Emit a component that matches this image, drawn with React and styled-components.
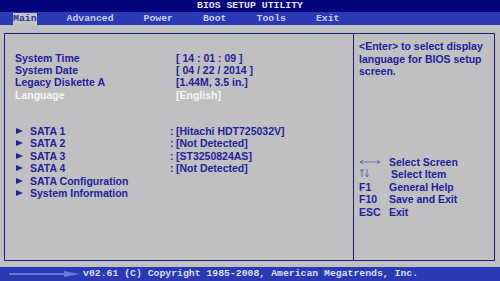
import React from "react";
import styled, { createGlobalStyle } from "styled-components";

const GlobalStyle = createGlobalStyle`
  html, body {
    margin: 0;
    padding: 0;
    background: #c0c0c0;
  }
  #root {
    width: 500px;
    height: 281px;
    overflow: hidden;
  }
`;

const Screen = styled.div`
  width: 500px;
  height: 281px;
  display: flex;
  flex-direction: column;
  background: #c0c0c2;
  font-family: "Liberation Sans", Arial, sans-serif;
`;

const TitleBar = styled.div`
  height: 12px;
  background: #06067c;
  color: #e4e4ec;
  font-family: "Liberation Mono", "DejaVu Sans Mono", monospace;
  font-weight: bold;
  font-size: 9.8px;
  line-height: 12px;
  text-align: center;
`;

const MenuBar = styled.div`
  height: 13px;
  background: #2a3ab4;
  display: flex;
  gap: 30px;
  padding-left: 13px;
`;

const MenuItem = styled.div`
  height: 12px;
  margin-top: 1px;
  font-family: "Liberation Mono", "DejaVu Sans Mono", monospace;
  font-weight: bold;
  font-size: 9.8px;
  line-height: 12px;
  color: ${(p) => (p.active ? "#2a3490" : "#c8cef0")};
  background: ${(p) => (p.active ? "#c4c4c8" : "transparent")};
`;

const Content = styled.div`
  flex: 1;
  padding: 8px 5px 6px 4px;
  display: flex;
`;

const Frame = styled.div`
  flex: 1;
  border: 1.5px solid #1e1e7e;
  display: grid;
  grid-template-columns: 349px 1fr;
`;

const LeftPanel = styled.div`
  border-right: 1.5px solid #1e1e7e;
  padding: 17.5px 0 0 10px;
`;

const RightPanel = styled.div`
  padding: 6px 0 0 5px;
  display: flex;
  flex-direction: column;
`;

const Group = styled.div`
  display: grid;
  grid-template-columns: 155px 6px auto;
  grid-auto-rows: 12.45px;
  align-items: center;
  margin-bottom: ${(p) => p.gap || 0}px;
`;

const Text = styled.div`
  font-size: 10.5px;
  font-weight: bold;
  line-height: 12.45px;
  color: ${(p) => (p.selected ? "#f4f4f4" : "#22229a")};
  white-space: nowrap;
`;

const SubLabel = styled(Text)`
  display: flex;
  align-items: center;
`;

const Arrow = styled.span`
  width: 0;
  height: 0;
  border-top: 3.5px solid transparent;
  border-bottom: 3.5px solid transparent;
  border-left: 7px solid #22229a;
  margin: 0 7px 0 1px;
`;

const HelpText = styled(Text)`
  line-height: 12.5px;
`;

const Legend = styled.div`
  margin-top: 78px;
  display: grid;
  grid-template-columns: 30px auto;
  grid-auto-rows: 12.5px;
  align-items: center;
`;

const KeyGlyph = styled.div`
  color: #3a3a9a;
  font-size: 10px;
  line-height: 12.5px;
  font-family: "DejaVu Sans", sans-serif;
`;

const Footer = styled.div`
  height: 14px;
  background: #2a3ab4;
  display: flex;
  align-items: center;
  padding-left: 8px;
  gap: 2px;
`;

const FooterText = styled.div`
  font-family: "Liberation Mono", "DejaVu Sans Mono", monospace;
  font-weight: bold;
  font-size: 9.8px;
  line-height: 14px;
  color: #dcdcf0;
  white-space: nowrap;
`;

const topRows = [
  ["System Time", "", "[ 14 : 01 : 09 ]"],
  ["System Date", "", "[ 04 / 22 / 2014 ]"],
  ["Legacy Diskette A", "", "[1.44M, 3.5 in.]"],
  ["Language", "", "[English]", true],
];

const sataRows = [
  ["SATA 1", ":", "[Hitachi HDT725032V]"],
  ["SATA 2", ":", "[Not Detected]"],
  ["SATA 3", ":", "[ST3250824AS]"],
  ["SATA 4", ":", "[Not Detected]"],
  ["SATA Configuration"],
  ["System Information"],
];

const LRArrow = () => (
  <svg width="22" height="6" viewBox="0 0 22 6">
    <path d="M1 3H21M1 3L4 1.2M1 3L4 4.8M21 3L18 1.2M21 3L18 4.8" stroke="#5a5aa8" strokeWidth="0.8" fill="none" />
  </svg>
);

const UDArrow = () => (
  <svg width="12" height="10" viewBox="0 0 12 10">
    <path d="M3 9V1M3 1L1.3 3.5M3 1L4.7 3.5M8 1V9M8 9L6.3 6.5M8 9L9.7 6.5" stroke="#5a5aa8" strokeWidth="0.8" fill="none" />
  </svg>
);

const FooterArrow = () => (
  <svg width="73" height="8" viewBox="0 0 73 8">
    <rect x="1" y="3" width="56" height="2" fill="#6878d8" />
    <path d="M56 1L72 4L56 7Z" fill="#6878d8" />
  </svg>
);

export default function App() {
  return (
    <>
      <GlobalStyle />
      <Screen>
        <TitleBar>BIOS SETUP UTILITY</TitleBar>
        <MenuBar>
          <MenuItem active>Main</MenuItem>
          <MenuItem>Advanced</MenuItem>
          <MenuItem>Power</MenuItem>
          <MenuItem>Boot</MenuItem>
          <MenuItem>Tools</MenuItem>
          <MenuItem>Exit</MenuItem>
        </MenuBar>
        <Content>
          <Frame>
            <LeftPanel>
              <Group gap={23.5}>
                {topRows.map(([label, colon, value, sel]) => (
                  <React.Fragment key={label}>
                    <Text selected={sel}>{label}</Text>
                    <Text>{colon}</Text>
                    <Text selected={sel}>{value}</Text>
                  </React.Fragment>
                ))}
              </Group>
              <Group>
                {sataRows.map(([label, colon, value]) => (
                  <React.Fragment key={label}>
                    <SubLabel>
                      <Arrow />
                      {label}
                    </SubLabel>
                    <Text>{colon}</Text>
                    <Text>{value}</Text>
                  </React.Fragment>
                ))}
              </Group>
            </LeftPanel>
            <RightPanel>
              <HelpText>
                &lt;Enter&gt; to select display
                <br />
                language for BIOS setup
                <br />
                screen.
              </HelpText>
              <Legend>
                <KeyGlyph><LRArrow /></KeyGlyph>
                <Text>Select Screen</Text>
                <KeyGlyph><UDArrow /></KeyGlyph>
                <Text style={{ paddingLeft: 2 }}>Select Item</Text>
                <Text>F1</Text>
                <Text>General Help</Text>
                <Text>F10</Text>
                <Text>Save and Exit</Text>
                <Text>ESC</Text>
                <Text>Exit</Text>
              </Legend>
            </RightPanel>
          </Frame>
        </Content>
        <Footer>
          <FooterArrow />
          <FooterText>v02.61 (C) Copyright 1985-2008, American Megatrends, Inc.</FooterText>
        </Footer>
      </Screen>
    </>
  );
}
